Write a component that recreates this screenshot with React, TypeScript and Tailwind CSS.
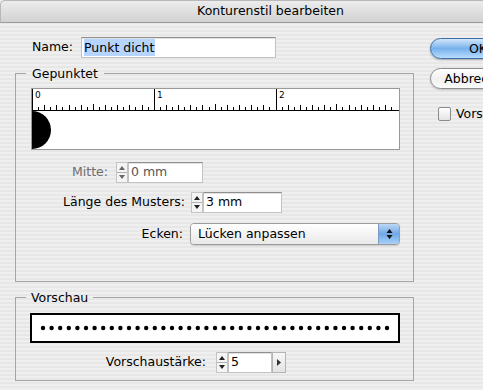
import React from 'react';

const font = "[font-family:'DejaVu_Sans',sans-serif]";

const Stepper = ({ dim = false }: { dim?: boolean }) => (
  <svg width="12" height="21" viewBox="0 0 12 21" className="shrink-0">
    <rect x="0.5" y="0.5" width="11" height="20" fill="#f4f4f4" stroke="#c4c4c4" />
    <line x1="1" y1="10.5" x2="11" y2="10.5" stroke="#b0b0b0" />
    <path d="M3 8 L6 4 L9 8 Z" fill={dim ? '#666' : '#222'} />
    <path d="M3 13 L6 17 L9 13 Z" fill={dim ? '#666' : '#222'} />
  </svg>
);

const Field = ({ w, children, dim = false }: { w: string; children: React.ReactNode; dim?: boolean }) => (
  <div
    className={`${w} h-[21px] bg-white border border-[#c2c2c2] border-t-[#8f8f8f] shadow-[inset_0_1px_0_#e2e2e2] flex items-center pl-[2px] text-[12.5px] ${
      dim ? 'text-[#555]' : 'text-black'
    }`}
  >
    {children}
  </div>
);

const Ruler = () => {
  const ticks: React.ReactNode[] = [];
  for (let i = 0; i < 60; i++) {
    const x = Math.round(i * 6.0875) + 0.5;
    if (x > 361) break;
    const h = i % 20 === 0 ? 21 : i % 10 === 0 ? 6 : i % 2 === 0 ? 5 : 3;
    ticks.push(<line key={i} x1={x} y1={21} x2={x} y2={21 - h} stroke="#000" />);
  }
  return (
    <svg width="367" height="60" viewBox="0 0 367 60" className="block">
      {ticks}
      <line x1="0" y1="21.5" x2="367" y2="21.5" stroke="#000" />
      <text x="3" y="9" fontSize="9" fontFamily="DejaVu Sans, sans-serif">0</text>
      <text x="125" y="9" fontSize="9" fontFamily="DejaVu Sans, sans-serif">1</text>
      <text x="247" y="9" fontSize="9" fontFamily="DejaVu Sans, sans-serif">2</text>
      <path d="M0 22 A19 19 0 0 1 0 60 Z" fill="#000" />
    </svg>
  );
};

const Dots = () => {
  const dots = Array.from({ length: 41 }, (_, i) => 11 + i * 8.6);
  return (
    <svg width="366" height="26" viewBox="0 0 366 26" className="block">
      {dots.map((x, i) => (
        <circle key={i} cx={x} cy={13} r={2.2} fill="#000" />
      ))}
    </svg>
  );
};

export default function App() {
  return (
    <div className={`w-[483px] h-[390px] overflow-hidden ${font} text-black`}>
      <div className="w-[540px] h-[390px] bg-[repeating-linear-gradient(180deg,#efefef_0px,#efefef_2px,#e7e7e7_2px,#e7e7e7_4px)]">
        {/* Titelleiste */}
        <div className="h-[23px] rounded-t-[5px] border-t border-l border-[#b8b8b8] border-b border-b-[#9a9a9a] bg-gradient-to-b from-[#ececec] to-[#d2d2d2] flex items-center justify-center text-[12.5px]">
          Konturenstil bearbeiten
        </div>

        <div className="flex">
          {/* linke Spalte */}
          <div className="ml-[15px] w-[399px]">
            <div className="mt-[14px] flex items-center">
              <div className="w-[58px] text-right text-[12.5px]">Name:</div>
              <div className="ml-[8px]">
                <Field w="w-[195px]">
                  <span className="bg-[#b5d5ff] leading-[17px] pr-[1px]">Punkt dicht</span>
                </Field>
              </div>
            </div>

            <fieldset className="mt-[8px] border border-[#a5a5a5] pl-[10px] pr-[12px] pt-[7px] pb-[36px]">
              <legend className="px-[6px] text-[12.5px] leading-[15px]">Gepunktet</legend>
              <div className="ml-[5px] w-[369px] h-[62px] border border-[#999] bg-white">
                <Ruler />
              </div>

              <div className="mt-[12px] flex items-center">
                <div className="w-[82px] text-right text-[12.5px] text-[#6e6e6e]">Mitte:</div>
                <div className="ml-[8px] flex">
                  <Stepper dim />
                  <Field w="w-[75px]" dim>0 mm</Field>
                </div>
              </div>

              <div className="mt-[9px] flex items-center">
                <div className="w-[159px] text-right text-[12.5px]">Länge des Musters:</div>
                <div className="ml-[6px] flex">
                  <Stepper />
                  <Field w="w-[79px]">3 mm</Field>
                </div>
              </div>

              <div className="mt-[10px] flex items-center">
                <div className="w-[157px] text-right text-[12.5px]">Ecken:</div>
                <div className="ml-[7px] w-[210px] h-[22px] flex rounded-[4px] border border-[#9c9c9c] shadow-[0_1px_1px_rgba(0,0,0,0.15)] overflow-hidden">
                  <div className="flex-1 bg-gradient-to-b from-white via-[#f4f4f4] to-[#e9e9e9] flex items-center pl-[7px] text-[12.5px]">
                    Lücken anpassen
                  </div>
                  <div className="w-[21px] border-l border-[#7a9cc6] bg-gradient-to-b from-[#bcd8f6] via-[#6fa8e6] to-[#a9d0f7] flex items-center justify-center">
                    <svg width="7" height="12" viewBox="0 0 7 12">
                      <path d="M0.5 5 L3.5 1 L6.5 5 Z" fill="#111" />
                      <path d="M0.5 7 L3.5 11 L6.5 7 Z" fill="#111" />
                    </svg>
                  </div>
                </div>
              </div>
            </fieldset>

            <fieldset className="mt-[8px] border border-[#a5a5a5] pl-[10px] pr-[12px] pt-[8px] pb-[7px]">
              <legend className="px-[5px] text-[12.5px] leading-[15px]">Vorschau</legend>
              <div className="ml-[4px] w-[370px] h-[30px] border-2 border-black bg-white">
                <Dots />
              </div>
              <div className="mt-[9px] flex items-center">
                <div className="w-[180px] text-right text-[12.5px]">Vorschaustärke:</div>
                <div className="ml-[10px] flex">
                  <Stepper />
                  <Field w="w-[44px]">5</Field>
                  <div className="w-[14px] h-[21px] border border-[#b5b5b5] bg-gradient-to-b from-[#f7f7f7] to-[#e3e3e3] flex items-center justify-center">
                    <svg width="4" height="7" viewBox="0 0 4 7">
                      <path d="M0 0 L4 3.5 L0 7 Z" fill="#333" />
                    </svg>
                  </div>
                </div>
              </div>
            </fieldset>
          </div>

          {/* rechte Spalte */}
          <div className="ml-[16px] w-[96px] pt-[15px] flex flex-col">
            <button className="h-[21px] rounded-full border border-[#3f6fa6] bg-gradient-to-b from-[#d3e6fa] via-[#78b2ec] to-[#b7dcfd] shadow-[0_1px_2px_rgba(0,0,0,0.3)] text-[12.5px] leading-[19px]">
              OK
            </button>
            <button className="mt-[9px] h-[21px] rounded-full border border-[#8d8d8d] bg-gradient-to-b from-white via-[#f1f1f1] to-[#fbfbfb] shadow-[0_1px_2px_rgba(0,0,0,0.2)] text-[12.5px] leading-[19px]">
              Abbrechen
            </button>
            <div className="mt-[16px] ml-[8px] flex items-center">
              <div className="w-[13px] h-[14px] rounded-[2px] border border-[#8a8a8a] bg-gradient-to-b from-white to-[#e4e4e4] shrink-0" />
              <span className="ml-[5px] text-[12.5px] whitespace-nowrap">Vorschau</span>
            </div>
          </div>
        </div>
      </div>
    </div>
  );
}
